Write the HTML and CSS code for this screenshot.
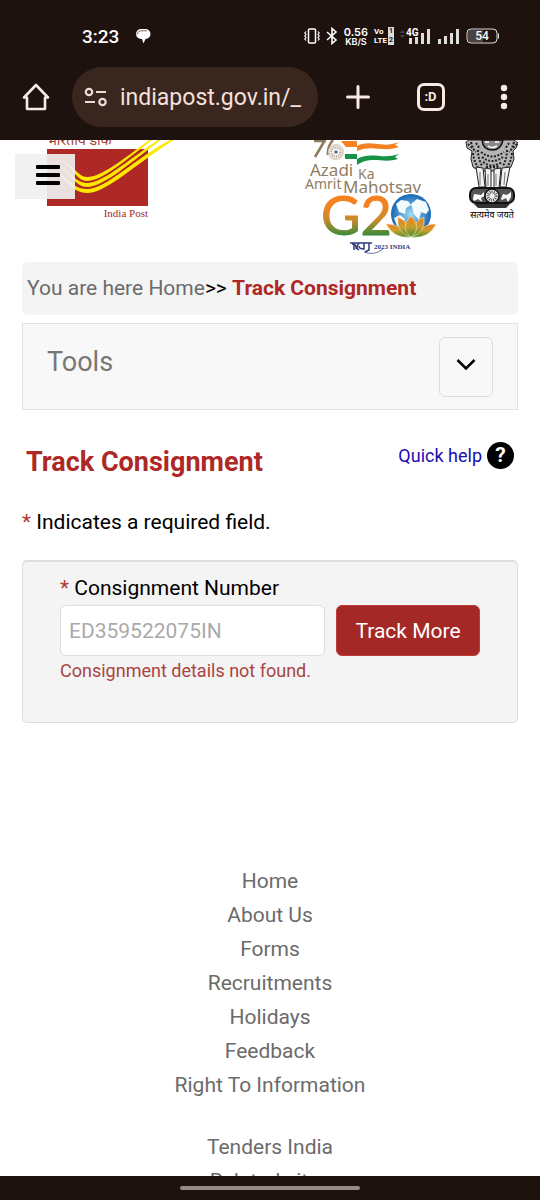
FILE: index.html
```html
<!DOCTYPE html>
<html lang="en">
<head>
    <meta charset="UTF-8">
    <meta name="viewport" content="width=device-width, initial-scale=1.0">
    <title>Track Consignment</title>
    <link rel="stylesheet" href="styles.css">
</head>
<body>

<div class="status-bar">
    <span class="time">3:23</span>
    <svg class="chat" width="16" height="16" viewBox="0 0 16 16">
        <path d="M6 1h4.500a5 5 0 0 1 0 10L8.500 15.500L7 11H6A5 5 0 0 1 6 1z" fill="#fff"/>
        <path d="M2 6.500C2.500 4 4 2.800 6.500 2.800H12" fill="none" stroke="#1d120e" stroke-width="0.6"/>
    </svg>
    <div class="status-icons">
        <svg width="16" height="18" viewBox="0 0 16 18" fill="none" stroke="#fff" stroke-width="1.500">
            <rect x="4.500" y="2" width="7" height="14" rx="1"/>
            <path d="M2 4.500L.8 6 2 7.500.8 9 2 10.500.8 12 2 13.500M14 4.500L15.200 6 14 7.500 15.200 9 14 10.500l1.200 1.500-1.200 1.500" stroke-width="1.200"/>
        </svg>
        <svg width="12" height="18" viewBox="0 0 12 18" fill="none" stroke="#fff" stroke-width="1.600">
            <path d="M1 5l9 8-4 3.500v-15L10 5l-9 8"/>
        </svg>
        <span class="speed"><b>0.56</b><small>KB/S</small></span>
        <span class="volte"><span>Vo<i>1</i></span><span>LTE<i>2</i></span></span>
        <svg width="32" height="18" viewBox="0 0 32 18" fill="#ddd">
            <path d="M0 6l2.500-3L5 6zM0 8l2.500 3L5 8z" fill="#4b403c"/>
            <text x="6" y="9" class="net">4G</text>
            <path d="M9 11h3v6H9zM15 10h3v7h-3zM21 6h3v11h-3zM27 2h3v15h-3z"/>
        </svg>
        <svg width="22" height="18" viewBox="0 0 22 18" fill="#ddd">
            <path d="M0 12h3v5H0zM6 9h3v8H6zM12 6h3v11h-3zM18 2h3v15h-3z"/>
        </svg>
        <svg width="34" height="18" viewBox="0 0 34 18">
            <path d="M5 3h12v12H5a3 3 0 0 1-3-3V6a3 3 0 0 1 3-3z" fill="#4b423f"/>
            <rect x="1" y="2" width="30" height="14" rx="4" fill="none" stroke="#ddd"/>
            <path d="M32.500 6.500v5" stroke="#ddd"/>
            <text x="16" y="13" text-anchor="middle" class="level">54</text>
        </svg>
    </div>
</div>

<div class="toolbar">
    <button class="home" aria-label="Home page">
        <svg width="28" height="28" viewBox="0 0 28 28" fill="none" stroke="#fbe9e3" stroke-width="2.600" stroke-linejoin="round" stroke-linecap="round">
            <path d="M2 14.500h3V26h18V14.500h3L14 2z"/>
        </svg>
    </button>
    <div class="address">
        <svg width="24" height="20" viewBox="0 0 24 20" fill="none" stroke="#f0dcd5" stroke-width="2.200">
            <circle cx="5" cy="5" r="3.200"/>
            <path d="M12 5h10M1 15h10"/>
            <circle cx="18.500" cy="15" r="3.200"/>
        </svg>
        <span>indiapost.gov.in/_</span>
    </div>
    <button class="tool" aria-label="New tab">
        <svg width="24" height="24" viewBox="0 0 24 24" stroke="#fbe9e3" stroke-width="3" stroke-linecap="round">
            <path d="M12 1.500v21M1.500 12h21"/>
        </svg>
    </button>
    <button class="tool"><span class="tabs">:D</span></button>
    <button class="tool" aria-label="Menu">
        <svg width="8" height="26" viewBox="0 0 8 26" fill="#fbe9e3">
            <circle cx="4" cy="4" r="3.200"/><circle cx="4" cy="13" r="3.200"/><circle cx="4" cy="22" r="3.200"/>
        </svg>
    </button>
</div>

<main class="page">
    <header class="logos">
        <button class="menu" aria-label="Navigation"><span></span><span></span><span></span></button>
        <svg width="135" height="84" viewBox="0 0 135 84">
            <text x="7" y="5" class="dak">भारतीय डाक</text>
            <rect x="7" y="9" width="101" height="57" fill="#ae2826"/>
            <g fill="#ffe800">
                <path d="M109 0C85 18 62 37 47 37C38 37 32 23 20 20C32 25 36 41 47 41C62 41 86 20 112 0z"/>
                <path d="M118 0C88 20 63 43 47 43C36 43 30 31 18 25C30 33 36 47 47 47C64 47 92 21 121 0z"/>
                <path d="M130 0C93 20 66 49 47 49C33 49 28 38 16 31C26 41 34 53 47 53C67 53 95 24 134 0z"/>
            </g>
            <text x="108" y="77" text-anchor="end" class="post">India Post</text>
        </svg>
        <svg class="azadi" width="140" height="116" viewBox="0 0 140 116">
            <defs>
                <linearGradient id="tricolor" x1="0" y1="56" x2="0" y2="96" gradientUnits="userSpaceOnUse">
                    <stop offset="0.200" stop-color="#f58220"/>
                    <stop offset="0.600" stop-color="#c98a2b"/>
                    <stop offset="1" stop-color="#2f8b3c"/>
                </linearGradient>
                <linearGradient id="petal" x1="0" y1="0" x2="0" y2="1">
                    <stop offset="0" stop-color="#f47b20"/>
                    <stop offset="0.500" stop-color="#c9a02c"/>
                    <stop offset="1" stop-color="#4a8a2f"/>
                </linearGradient>
                <radialGradient id="sea">
                    <stop offset="0" stop-color="#9ddcf5"/>
                    <stop offset="1" stop-color="#1767b4"/>
                </radialGradient>
            </defs>
            <path d="M14 1h12M25 0L15 17M33 0q-6 7-5 15" fill="none" stroke="#8f7a5c" stroke-width="2.500"/>
            <circle cx="36" cy="12" r="7" fill="#fff" stroke="#d9d2c6" stroke-width="2"/>
            <circle cx="36" cy="12" r="4.500" fill="none" stroke="#a3947c" stroke-width="2" stroke-dasharray="1 1"/>
            <circle cx="36" cy="12" r="1.800" fill="#5c6a96"/>
            <path d="M41 1h16v5c14-7 25 3 42-4l-4 3 4 2c-16 6-26-3-42 4V7H46z" fill="#f58220"/>
            <path d="M45 14h12v5c14-8 25 1 42-5l-4 3 3 2c-16 5-26-4-41 6v-6H45z" fill="#159447"/>
            <g class="amrit">
                <text x="10" y="36" class="big">Azadi</text>
                <text x="58" y="39">Ka</text>
                <text x="5" y="49">Amrit</text>
                <text x="43" y="53" class="big">Mahotsav</text>
            </g>
            <text x="21" y="95" class="g20" fill="url(#tricolor)" stroke="url(#tricolor)" stroke-width="1">G2</text>
            <circle cx="111" cy="74" r="20" fill="url(#sea)"/>
            <path d="M96 64l5-4 7 1 3 4-5 3-1 6-6-2zM111 64l6-5 9 3 3 8-3 4-5-2-2 8-5-6zM94 78l6-3 5 4-2 6-6 1z" fill="#f3fbff"/>
            <g fill="url(#petal)" stroke="#f9e7bb" stroke-width="0.600">
                <path d="M86 84q12-1 25 13-17 2-25-13zM136 84q-12-1-25 13 18 2 25-13z"/>
                <path d="M98 77q12 5 13 20-15-4-13-20zM124 77q-12 5-13 20 15-4 13-20z"/>
                <path d="M111 76q12 12 0 21-12-9 0-21z"/>
            </g>
            <path d="M50 103h22M54 103v7M59 103q-4 5 0 7M64 103v6q-5 0-5-3M69 103v7l-4 2M52 104q5 0 4 5" fill="none" stroke="#303a80" stroke-width="1.500"/>
            <path d="M64 112q10 4 19-3" fill="none" stroke="#303a80" stroke-width="0.700"/>
            <text x="74" y="109" class="year">2023 INDIA</text>
        </svg>
        <svg width="60" height="84" viewBox="-2 0 60 84">
            <g fill="#b5b5b5" stroke="#222" stroke-width="1">
                <path d="M6 2l3-2h45l4 3-2 5-3 3 1 8-3 8-6 4H19l-6-4-2-8 1-8-5-3z"/>
                <path d="M16 27l3 20h6l-2-19zM25 28l1 20h5V29zM34 29v19h5l2-20zM42 28l-2 19h6l4-20z" fill="#f2f2f2"/>
            </g>
            <g fill="none" stroke="#222" stroke-width="2" stroke-dasharray="2 1.500">
                <path d="M11 2q2 8 5 10M13 13q1 9 5 14M18 10q0 8 4 16M54 2q-2 8-5 10M52 13q-1 9-5 14M47 10q0 8-4 16"/>
                <path d="M21 12q11 9 23 0M22 17q10 8 21 0M23 22q9 7 19 0M26 27h14M8 4l5 5M57 4l-5 5M16 3l4 6M49 3l-4 6"/>
            </g>
            <path d="M22 0q1 10 10 10t11-10z" fill="#888" stroke="#111" stroke-width="1.500"/>
            <path d="M25 2h4M35 2h4M28 6q4 3 9 0" stroke="#fff" stroke-width="1.500" fill="none"/>
            <path d="M20 32v13M28 34v12M36 34v12M45 32l-1 13" stroke="#777" stroke-width="1" fill="none"/>
            <rect x="10" y="48" width="44" height="15" rx="6" fill="#555" stroke="#111" stroke-width="2"/>
            <path d="M14 64h36l-4 4H18z" fill="#333"/>
            <circle cx="32" cy="56" r="7" fill="#eee" stroke="#111" stroke-width="1.500"/>
            <circle cx="32" cy="56" r="4" fill="none" stroke="#555" stroke-width="3" stroke-dasharray="1 1"/>
            <path d="M13 59l1-5 7 1 3-3v4l-3 2 1 4-4-3-4 2zM41 59l2-5 4 1 4-3v5l-3 5-2-4-4 2z" fill="#fff"/>
            <text x="32" y="78" text-anchor="middle" class="motto">सत्यमेव जयते</text>
        </svg>
    </header>

    <nav class="breadcrumb">
        <span>You are here</span> <a href="#">Home</a>&gt;&gt; <strong>Track Consignment</strong>
    </nav>

    <section class="tools">
        <h2>Tools</h2>
        <button aria-label="Show tools">
            <svg width="20" height="14" viewBox="0 0 20 14" fill="none" stroke="#000" stroke-width="2.500">
                <path d="M1.500 2l8.500 8.500L18.500 2"/>
            </svg>
        </button>
    </section>

    <div class="heading">
        <h1>Track Consignment</h1>
        <a href="#">Quick help <span class="help">?</span></a>
    </div>

    <p class="note"><span class="required">*</span> Indicates a required field.</p>

    <form class="panel">
        <label for="consignment"><span class="required">*</span> Consignment Number</label>
        <div class="row">
            <input type="text" id="consignment" placeholder="ED359522075IN">
            <button type="button">Track More</button>
        </div>
        <p class="error">Consignment details not found.</p>
    </form>

    <footer>
        <ul>
            <li><a href="#">Home</a></li>
            <li><a href="#">About Us</a></li>
            <li><a href="#">Forms</a></li>
            <li><a href="#">Recruitments</a></li>
            <li><a href="#">Holidays</a></li>
            <li><a href="#">Feedback</a></li>
            <li><a href="#">Right To Information</a></li>
        </ul>
        <ul>
            <li><a href="#">Tenders India</a></li>
            <li><a href="#">Related sites</a></li>
        </ul>
    </footer>
</main>

<div class="nav-bar"><span></span></div>

</body>
</html>
```
FILE: styles.css
```css
* {
    box-sizing: border-box;
}
body {
    margin: 0;
    height: 100vh;
    display: flex;
    flex-direction: column;
    background: #fff;
    color: #000;
    font-family: Roboto, sans-serif;
    font-size: 21px;
}
button {
    font-family: inherit;
    padding: 0;
    border: none;
    background: none;
    cursor: pointer;
}
svg {
    display: block;
    flex: none;
}
a {
    text-decoration: none;
}

/* phone status bar */
.status-bar {
    flex: none;
    height: 67px;
    padding: 5px 40px 0 82px;
    display: flex;
    align-items: center;
    background: #1d120e;
    color: #fff;
}
.time {
    font-size: 19px;
    font-weight: 500;
}
.chat {
    margin-left: 16px;
}
.status-icons {
    margin-left: auto;
    display: flex;
    align-items: center;
    gap: 6px;
}
.speed {
    text-align: center;
    font-family: Inter, sans-serif;
}
.speed b,
.speed small {
    display: block;
    font-size: 11px;
    line-height: 10px;
    font-weight: 600;
}
.speed small {
    font-size: 9px;
    line-height: 9px;
}
.volte span {
    display: flex;
    justify-content: space-between;
    gap: 1px;
    font-size: 8px;
    line-height: 9px;
    font-weight: 700;
}
.volte i {
    padding: 0 1px;
    background: #ddd;
    color: #1d120e;
    font-size: 7px;
    line-height: 9px;
    font-style: normal;
}
.net {
    font-size: 10px;
    font-weight: 700;
    fill: #fff;
}
.level {
    font-size: 12px;
    font-weight: 500;
    fill: #fff;
}

/* browser toolbar */
.toolbar {
    flex: none;
    height: 73px;
    padding-bottom: 13px;
    display: flex;
    align-items: center;
    background: #1d120e;
}
.home {
    width: 72px;
    display: flex;
    justify-content: center;
}
.address {
    flex: 1;
    min-width: 0;
    height: 60px;
    margin-right: 3px;
    padding-left: 12px;
    display: flex;
    align-items: center;
    gap: 12px;
    border-radius: 30px;
    background: #39261f;
    color: #f5e1da;
    font-size: 23px;
    white-space: nowrap;
    overflow: hidden;
}
.tool {
    width: 73px;
    display: flex;
    justify-content: center;
}
.tabs {
    width: 28px;
    height: 28px;
    border: 3px solid #fbe9e3;
    border-radius: 7px;
    color: #fbe9e3;
    font-size: 13px;
    line-height: 22px;
    font-weight: 700;
}

/* site */
.page {
    flex: 1;
    min-height: 0;
    padding: 0 22px;
    overflow: hidden;
}
.logos {
    position: relative;
    height: 122px;
    padding-left: 18px;
    display: flex;
    align-items: flex-start;
    gap: 18px;
}
.menu {
    position: absolute;
    top: 14px;
    left: -7px;
    width: 60px;
    height: 45px;
    display: flex;
    flex-direction: column;
    align-items: center;
    justify-content: center;
    gap: 4px;
    padding: 0 0 4px 5px;
    background: rgba(240, 240, 240, 0.92);
}
.menu span {
    width: 24px;
    height: 4px;
    border-radius: 1px;
    background: #000;
}
.azadi {
    margin-left: auto;
}
.dak {
    font-family: "Noto Sans", "Noto Sans Devanagari", serif;
    font-size: 14px;
    fill: #a33a35;
}
.post {
    font-family: "Liberation Serif", serif;
    font-size: 11px;
    fill: #a52b28;
}
.amrit {
    font-family: "Noto Sans", sans-serif;
    font-size: 14px;
    fill: #8f7d62;
}
.amrit .big {
    font-size: 17px;
}
.g20 {
    font-family: Lato, sans-serif;
    font-size: 54px;
}
.year {
    font-family: "Liberation Serif", serif;
    font-size: 7px;
    font-weight: 700;
    fill: #303a80;
}
.motto {
    font-family: "Noto Sans", "Noto Sans Devanagari", serif;
    font-size: 9px;
}
.breadcrumb {
    padding: 0 5px;
    border-radius: 6px;
    background: #f4f4f4;
    line-height: 53px;
}
.breadcrumb span,
.breadcrumb a {
    color: #6b6b6b;
}
.breadcrumb strong {
    color: #ae2826;
    font-weight: 700;
}
.tools {
    height: 87px;
    margin-top: 8px;
    padding: 13px 24px 0;
    display: flex;
    justify-content: space-between;
    border: 1px solid #e2e2e2;
    background: #f8f8f8;
}
.tools h2 {
    margin: 0;
    color: #777;
    font-size: 27px;
    line-height: 50px;
    font-weight: 400;
}
.tools button {
    width: 54px;
    height: 60px;
    padding-bottom: 4px;
    display: flex;
    align-items: center;
    justify-content: center;
    border: 1px solid #ddd;
    border-radius: 6px;
}
.heading {
    margin-top: 28px;
    padding: 0 4px;
    display: flex;
    justify-content: space-between;
}
.heading h1 {
    margin: 0;
    color: #ae2826;
    font-size: 27px;
    line-height: 48px;
    font-weight: 700;
}
.heading a {
    height: 34px;
    display: flex;
    align-items: center;
    gap: 5px;
    color: #1a0dab;
    font-size: 18px;
}
.help {
    width: 27px;
    border-radius: 50%;
    background: #000;
    color: #fff;
    font-size: 21px;
    line-height: 27px;
    font-weight: 700;
    text-align: center;
}
.note {
    margin: 22px 0 24px;
    line-height: 28px;
}
.required {
    color: #b03a37;
}
.panel {
    height: 163px;
    padding: 12px 37px 0;
    border: 1px solid #ddd;
    border-top-width: 2px;
    border-radius: 5px;
    background: #f4f4f4;
}
.panel label {
    display: block;
    margin-bottom: 3px;
    line-height: 28px;
}
.row {
    display: flex;
    gap: 11px;
}
.row input {
    flex: 1;
    min-width: 0;
    height: 51px;
    padding: 0 8px;
    border: 1px solid #ddd;
    border-radius: 6px;
    background: #fff;
    font-family: inherit;
    font-size: 21px;
}
.row input::placeholder {
    color: #aaa;
}
.row button {
    width: 144px;
    border: 1px solid #c23a38;
    border-radius: 6px;
    background: #a42825;
    color: #fff;
    font-size: 21px;
}
.error {
    margin: 0;
    color: #a94442;
    font-size: 18px;
    line-height: 30px;
}
footer {
    margin-top: 141px;
    text-align: center;
    line-height: 34px;
}
footer ul {
    margin: 0 0 28px;
    padding: 0;
    list-style: none;
}
footer a {
    color: #6b6b6b;
}

/* gesture bar */
.nav-bar {
    flex: none;
    height: 24px;
    display: flex;
    align-items: center;
    justify-content: center;
    background: #1d120e;
}
.nav-bar span {
    width: 180px;
    height: 4px;
    border-radius: 2px;
    background: #958c88;
}
```
